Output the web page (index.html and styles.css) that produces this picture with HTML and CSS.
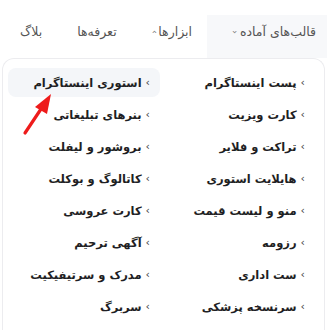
FILE: index.html
```html
<!DOCTYPE html>
<html lang="fa" dir="rtl">
<head>
<meta charset="utf-8">
<link rel="stylesheet" href="styles.css">
</head>
<body>
<nav class="nav">
  <a class="nav-item active">قالب‌های آماده<span class="caret up">‹</span></a>
  <a class="nav-item">ابزارها<span class="caret">‹</span></a>
  <a class="nav-item">تعرفه‌ها</a>
  <a class="nav-item">بلاگ</a>
</nav>
<div class="panel">
  <ul class="grid">
    <li class="item">پست اینستاگرام</li>
    <li class="item hl">استوری اینستاگرام</li>
    <li class="item">کارت ویزیت</li>
    <li class="item">بنرهای تبلیغاتی</li>
    <li class="item">تراکت و فلایر</li>
    <li class="item">بروشور و لیفلت</li>
    <li class="item">هایلایت استوری</li>
    <li class="item">کاتالوگ و بوکلت</li>
    <li class="item">منو و لیست قیمت</li>
    <li class="item">کارت عروسی</li>
    <li class="item">رزومه</li>
    <li class="item">آگهی ترحیم</li>
    <li class="item">ست اداری</li>
    <li class="item">مدرک و سرتیفیکیت</li>
    <li class="item">سرنسخه پزشکی</li>
    <li class="item">سربرگ</li>
  </ul>
  <svg class="arrow" width="50" height="50" viewBox="0 0 50 50">
    <line x1="15" y1="41" x2="33" y2="14" stroke="#ee1b1b" stroke-width="3.2" stroke-linecap="round"/>
    <polygon points="41,2 25,15 37,22" fill="#ee1b1b"/>
  </svg>
</div>
</body>
</html>
```
FILE: styles.css
```css
* { box-sizing: border-box; }
html, body { margin: 0; padding: 0; background: #fff; }
body {
  direction: rtl;
  font-family: "DejaVu Sans", "Noto Sans", sans-serif;
  width: 327px;
  height: 330px;
  overflow: hidden;
}
.nav {
  display: flex;
  align-items: stretch;
  margin-top: 15px;
  height: 43px;
}
.nav-item {
  flex-shrink: 0;
  display: flex;
  align-items: flex-start;
  padding: 9px 35px 0 0;
  font-size: 12.5px;
  color: #555;
  white-space: nowrap;
}
.nav-item.active {
  background: #f7f8fa;
  width: 120px;
  padding-right: 11px;
}
.nav-item:nth-child(2) { padding-right: 15px; }
.caret {
  display: inline-block;
  font-size: 9px;
  color: #777;
  margin-right: 3px;
  margin-top: 3px;
  transform: rotate(-90deg);
}
.caret.up { transform: rotate(90deg); }
.panel {
  position: relative;
  margin: 0 2px;
  border: 1px solid #ececef;
  border-bottom: none;
  border-radius: 12px 12px 0 0;
  padding: 9px 9px 0 5px;
  height: 272px;
}
.grid {
  list-style: none;
  margin: 0;
  padding: 0;
  display: grid;
  grid-template-columns: 152px 152px;
  column-gap: 3px;
  row-gap: 3px;
}
.item {
  height: 29px;
  display: flex;
  align-items: center;
  padding-right: 10px;
  font-size: 11.5px;
  font-weight: bold;
  color: #1f1f24;
  border-radius: 8px;
  white-space: nowrap;
}
.item::before {
  content: "›";
  font-weight: normal;
  font-size: 11px;
  color: #444;
  margin-left: 4px;
}
.item.hl { background: #f4f6f9; }
.arrow {
  position: absolute;
  left: 7px;
  top: 33px;
}
```
